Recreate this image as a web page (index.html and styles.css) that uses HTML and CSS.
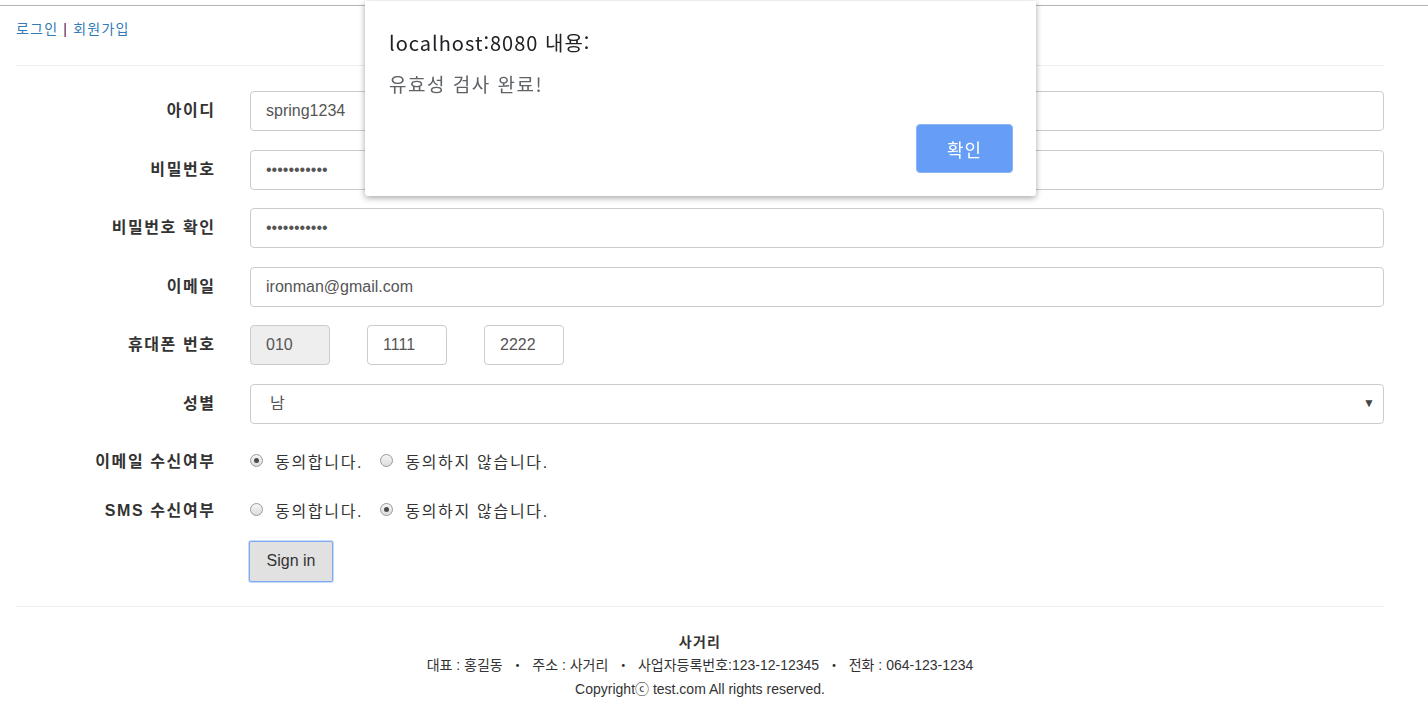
FILE: index.html
```html
<!DOCTYPE html>
<html lang="ko">
<head>
    <meta charset="UTF-8">
    <meta name="viewport" content="width=device-width, initial-scale=1.0">
    <title>회원가입</title>
    <link rel="stylesheet" href="styles.css">
</head>
<body>
    <div class="topline"></div>
    <div class="page">
        <div class="auth"><a href="#">로그인</a> <span class="sep">|</span> <a href="#">회원가입</a></div>
        <hr class="rule">

        <form class="join">
            <div class="row">
                <label>아이디</label>
                <input class="text" type="text" value="spring1234">
            </div>
            <div class="row">
                <label>비밀번호</label>
                <input class="text" type="password" value="spring12345">
            </div>
            <div class="row">
                <label>비밀번호 확인</label>
                <input class="text" type="password" value="spring12345">
            </div>
            <div class="row">
                <label>이메일</label>
                <input class="text" type="text" value="ironman@gmail.com">
            </div>
            <div class="row">
                <label>휴대폰 번호</label>
                <div class="phone">
                    <input class="text short" type="text" value="010" readonly>
                    <input class="text short" type="text" value="1111">
                    <input class="text short" type="text" value="2222">
                </div>
            </div>
            <div class="row">
                <label>성별</label>
                <div class="select-wrap">
                    <select class="text">
                        <option>남</option>
                        <option>여</option>
                    </select>
                    <span class="caret">&#9660;</span>
                </div>
            </div>
            <div class="row radio-row first">
                <label>이메일 수신여부</label>
                <div class="choices">
                    <label class="choice"><input type="radio" name="mail" checked> 동의합니다.</label>
                    <label class="choice"><input type="radio" name="mail"> 동의하지 않습니다.</label>
                </div>
            </div>
            <div class="row radio-row">
                <label>SMS 수신여부</label>
                <div class="choices">
                    <label class="choice"><input type="radio" name="sms"> 동의합니다.</label>
                    <label class="choice"><input type="radio" name="sms" checked> 동의하지 않습니다.</label>
                </div>
            </div>
            <div class="row submit-row">
                <span></span>
                <div><button type="button" class="btn">Sign in</button></div>
            </div>
        </form>

        <hr class="rule bottom">

        <footer>
            <p class="company">사거리</p>
            <p>대표 : 홍길동 &nbsp;・&nbsp; 주소 : 사거리 &nbsp;・&nbsp; 사업자등록번호:123-12-12345 &nbsp;・&nbsp; 전화 : 064-123-1234</p>
            <p>Copyrightⓒ test.com All rights reserved.</p>
        </footer>
    </div>

    <!-- browser alert -->
    <div class="alert">
        <div class="alert-title">localhost:8080 내용:</div>
        <div class="alert-msg">유효성 검사 완료!</div>
        <div class="alert-actions"><button type="button" class="alert-ok">확인</button></div>
    </div>
</body>
</html>
```

FILE: styles.css
```css
/* Base */
body {
    margin: 0;
    padding: 0;
    background: #fff;
    color: #333;
    font-family: "Liberation Sans", "Noto Sans CJK KR", sans-serif;
    font-size: 14px;
}
.topline {
    height: 5px;
    border-bottom: 1px solid #b4b4b4;
}
.page {
    margin-left: 16px;
    width: 1368px;
}
/* Top links */
.auth {
    padding-top: 13px;
    line-height: 20px;
    font-size: 14px;
    letter-spacing: 1.2px;
}
.auth a {
    color: #337ab7;
    text-decoration: none;
}
.auth .sep {
    color: #5a2040;
}
.rule {
    border: 0;
    border-top: 1px solid #eee;
    margin: 26px 0 0;
}
/* Form */
.join {
    display: flex;
    flex-direction: column;
    gap: 18.6px;
    margin-top: 25px;
}
.row {
    display: grid;
    grid-template-columns: 198px 1134px;
    column-gap: 36px;
    align-items: center;
}
.row > label {
    text-align: right;
    font-weight: bold;
    font-size: 16px;
    letter-spacing: 1.6px;
    margin-right: -1.6px;
    padding-bottom: 4px;
    color: #333;
}
.text {
    box-sizing: border-box;
    height: 40px;
    width: 100%;
    padding: 0 15px;
    border: 1px solid #ccc;
    border-radius: 4px;
    font-family: "Liberation Sans", "Noto Sans CJK KR", sans-serif;
    font-size: 16px;
    color: #555;
    background: #fff;
    outline: none;
}
.phone {
    display: flex;
    gap: 37px;
}
.text.short {
    width: 80px;
}
.text[readonly] {
    background: #eee;
}
.select-wrap {
    position: relative;
}
.select-wrap select {
    appearance: none;
    -webkit-appearance: none;
    padding-left: 19px;
}
.select-wrap .caret {
    position: absolute;
    right: 9px;
    top: 12px;
    font-size: 12px;
    color: #444;
    pointer-events: none;
}
/* Radio rows */
.radio-row {
    height: 30px;
    margin-top: 4.4px;
}
.radio-row + .radio-row {
    margin-top: 0.4px;
}
.choices {
    display: flex;
    gap: 17px;
    padding-bottom: 2px;
}
.choice {
    display: flex;
    align-items: center;
    gap: 12px;
    font-size: 16px;
    letter-spacing: 1.7px;
    color: #333;
}
.choice input {
    appearance: none;
    -webkit-appearance: none;
    margin: 0;
    width: 13px;
    height: 13px;
    border: 1px solid #9a9a9a;
    border-radius: 50%;
    background: linear-gradient(#f6f6f6, #dcdcdc);
    box-sizing: border-box;
    position: relative;
}
.choice input:checked::after {
    content: "";
    position: absolute;
    left: 3px;
    top: 3px;
    width: 5px;
    height: 5px;
    border-radius: 50%;
    background: #4a4a4a;
}
/* Submit */
.submit-row {
    margin-top: -3.6px;
}
.btn {
    width: 84px;
    height: 41px;
    border: 1px solid #7fa9f3;
    border-radius: 2px;
    background: #e1e1e1;
    box-shadow: 0 0 0 1px #c7dbfb;
    font-family: "Liberation Sans", sans-serif;
    font-size: 16px;
    color: #333;
    margin-left: -1px;
}
.rule.bottom {
    margin-top: 24px;
}
/* Footer */
footer {
    text-align: center;
    padding-top: 24px;
}
footer p {
    margin: 0;
    line-height: 23.5px;
    font-size: 14px;
    color: #333;
}
footer .company {
    font-weight: bold;
    letter-spacing: 1.3px;
}
/* Alert dialog */
.alert {
    position: fixed;
    top: 1px;
    left: 365px;
    width: 671px;
    height: 195px;
    box-sizing: border-box;
    background: #fff;
    border-radius: 0 0 3px 3px;
    box-shadow: 0 2px 6px rgba(0, 0, 0, 0.35);
    padding: 27px 23px 0 24px;
    font-family: "Noto Sans CJK KR", sans-serif;
}
.alert-title {
    font-size: 20px;
    line-height: 30px;
    letter-spacing: 1px;
    color: #202124;
}
.alert-msg {
    margin-top: 13px;
    font-size: 19px;
    line-height: 26px;
    letter-spacing: 1.5px;
    color: #5f6368;
}
.alert-actions {
    display: flex;
    justify-content: flex-end;
    margin-top: 27px;
}
.alert-ok {
    width: 97px;
    height: 49px;
    border: 1px solid #8db4f7;
    border-radius: 4px;
    background: #669df6;
    color: #fff;
    font-family: "Noto Sans CJK KR", sans-serif;
    font-size: 18px;
    letter-spacing: 1px;
}
```
